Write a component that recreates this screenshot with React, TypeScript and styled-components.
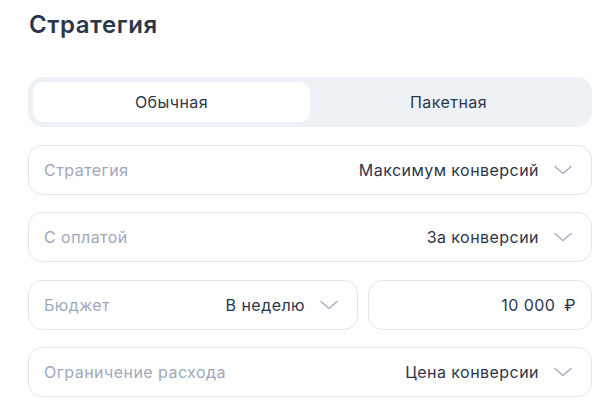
import React from "react";
import styled, { createGlobalStyle } from "styled-components";

const Global = createGlobalStyle`
  html, body { margin: 0; padding: 0; background: #ffffff; }
  body { font-family: Inter, "Noto Sans", sans-serif; -webkit-font-smoothing: antialiased; }
`;

const Page = styled.div`
  width: 605px;
  height: 406px;
  box-sizing: border-box;
  padding: 9px 13px 0 28px;
  display: flex;
  flex-direction: column;
  overflow: hidden;
`;

const Title = styled.h1`
  margin: 0 0 0 1px;
  font-size: 24px;
  line-height: 32px;
  font-weight: 600;
  color: #2c364b;
  letter-spacing: 0.55px;
`;

const Stack = styled.div`
  margin-top: 36px;
  display: flex;
  flex-direction: column;
  gap: 17.5px;
  letter-spacing: 0.45px;
`;

const Tabs = styled.div`
  height: 50px;
  box-sizing: border-box;
  padding: 5px;
  border-radius: 15px;
  background: #eef1f6;
  display: grid;
  grid-template-columns: 1fr 1fr;
`;

const Tab = styled.button<{ $active?: boolean }>`
  border: none;
  border-radius: 11px;
  background: ${(p) => (p.$active ? "#ffffff" : "transparent")};
  font-family: inherit;
  font-size: 16px;
  letter-spacing: inherit;
  color: #2c364b;
  cursor: pointer;
  padding: 0;
`;

const Row = styled.div`
  display: flex;
  gap: 10px;
`;

const Field = styled.div<{ $width?: string; $padRight?: number }>`
  flex: ${(p) => (p.$width ? `0 0 ${p.$width}` : "1 1 auto")};
  height: 50px;
  box-sizing: border-box;
  border: 1px solid #e3e6ef;
  border-radius: 14px;
  display: flex;
  align-items: center;
  padding: 0 ${(p) => p.$padRight ?? 18}px 0 15px;
  font-size: 16px;
`;

const Label = styled.span`
  color: #a0a8bb;
  flex: 1 1 auto;
`;

const Value = styled.span`
  color: #2c364b;
`;

const Chevron = styled.svg`
  margin-left: 14px;
  width: 20px;
  height: 10px;
  flex: none;
`;

const Ruble = styled.span`
  margin-left: 9px;
`;

const Arrow = () => (
  <Chevron viewBox="0 0 20 10" fill="none">
    <path d="M2 1.5 L10 8.5 L18 1.5" stroke="#aab1c3" strokeWidth="1.6" strokeLinecap="round" strokeLinejoin="round" />
  </Chevron>
);

const Select = ({ label, value, width }: { label: string; value: string; width?: string }) => (
  <Field $width={width}>
    <Label>{label}</Label>
    <Value>{value}</Value>
    <Arrow />
  </Field>
);

export default function App() {
  return (
    <>
      <Global />
      <Page>
        <Title>Стратегия</Title>
        <Stack>
          <Tabs>
            <Tab $active>Обычная</Tab>
            <Tab>Пакетная</Tab>
          </Tabs>
          <Select label="Стратегия" value="Максимум конверсий" />
          <Select label="С оплатой" value="За конверсии" />
          <Row>
            <Select label="Бюджет" value="В неделю" width="330px" />
            <Field $padRight={15}>
              <Label />
              <Value>10 000<Ruble>₽</Ruble></Value>
            </Field>
          </Row>
          <Select label="Ограничение расхода" value="Цена конверсии" />
        </Stack>
      </Page>
    </>
  );
}
